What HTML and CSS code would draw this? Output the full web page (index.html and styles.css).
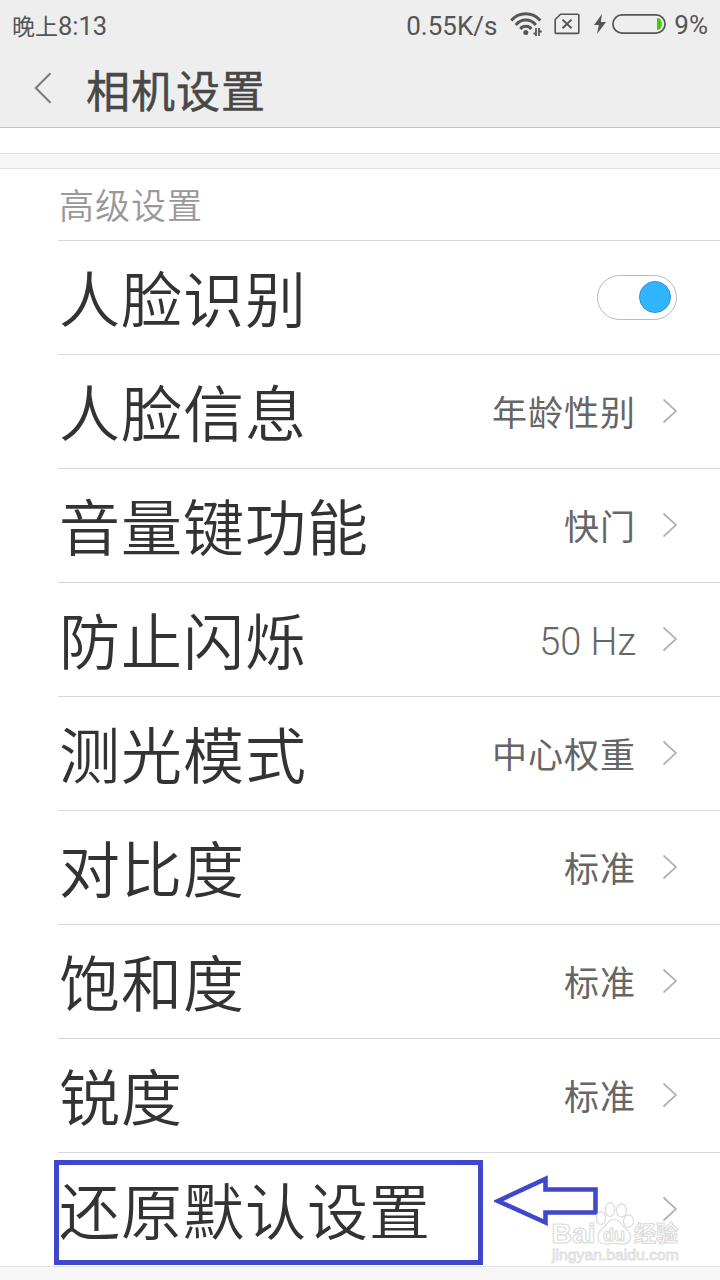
FILE: index.html
```html
<!DOCTYPE html>
<html lang="zh-CN">

<head>
    <meta charset="UTF-8">
    <meta name="viewport" content="width=device-width, initial-scale=1.0">
    <title>相机设置</title>
    <link rel="stylesheet" href="styles.css">
</head>

<body>

    <svg class="symbols" width="0" height="0">
        <symbol id="chevron" viewBox="0 0 16 26">
            <path d="M1.5 1.5 L14 13 L1.5 24.5" fill="none" stroke="#b2b2b2" stroke-width="1.7"/>
        </symbol>
    </svg>

    <header>

        <div class="status-bar">
            <span class="time">晚上<span class="clock">8:13</span></span>
            <span class="speed">0.55K/s</span>
            <svg class="wifi" width="34" height="26" viewBox="0 0 34 26">
                <g fill="none" stroke="#555" stroke-width="3">
                    <path d="M1.2 9.6 C9 0.6 22.5 0.6 30.3 9.6"/>
                    <path d="M5.8 14 C11 7.4 20.6 7.4 25.8 14"/>
                    <path d="M10.3 18 C13 14.4 18.6 14.4 21.3 18"/>
                </g>
                <circle cx="15.8" cy="21.4" r="2.5" fill="#555"/>
                <path d="M26 17 V25 M29 17 V25 M23.5 22.5 H26 M29 20.5 H31.8" stroke="#555" stroke-width="1.8"/>
            </svg>
            <svg class="sim" width="26" height="22" viewBox="0 0 26 22">
                <path d="M6.5 1.2 H24 Q24.8 1.2 24.8 2 V19.6 Q24.8 20.4 24 20.4 H2 Q1.2 20.4 1.2 19.6 V6.5 Z" fill="none" stroke="#555" stroke-width="1.6"/>
                <path d="M8.5 6.6 L17.5 15.2 M17.5 6.6 L8.5 15.2" stroke="#555" stroke-width="2"/>
            </svg>
            <svg class="bolt" width="12" height="20" viewBox="0 0 12 20">
                <path d="M8 0 L0 11 H4.8 L3 20 L12 8 H6.8 Z" fill="#555"/>
            </svg>
            <svg class="battery" width="54" height="20" viewBox="0 0 54 20">
                <rect x="0.9" y="0.9" width="52.2" height="18.2" rx="9.1" fill="none" stroke="#555" stroke-width="1.7"/>
                <path d="M45 4 C51.4 4 51.4 16 45 16 Z" fill="#46c800"/>
            </svg>
            <span class="percent">9%</span>
        </div>

        <div class="title-bar">
            <svg class="back" width="18" height="32" viewBox="0 0 18 32">
                <path d="M16 1.8 L1.8 16 L16 30.2" fill="none" stroke="#7a7a7a" stroke-width="2" stroke-linecap="round"/>
            </svg>
            <h1>相机设置</h1>
        </div>

    </header>

    <main>

        <div class="divider"></div>

        <section class="settings">
            <h2>高级设置</h2>

            <div class="row">
                <span class="label">人脸识别</span>
                <span class="switch"><span class="knob"></span></span>
            </div>
            <div class="row">
                <span class="label">人脸信息</span>
                <span class="value">年龄性别</span>
                <svg class="chevron"><use href="#chevron"/></svg>
            </div>
            <div class="row">
                <span class="label">音量键功能</span>
                <span class="value">快门</span>
                <svg class="chevron"><use href="#chevron"/></svg>
            </div>
            <div class="row">
                <span class="label">防止闪烁</span>
                <span class="value latin">50 Hz</span>
                <svg class="chevron"><use href="#chevron"/></svg>
            </div>
            <div class="row">
                <span class="label">测光模式</span>
                <span class="value">中心权重</span>
                <svg class="chevron"><use href="#chevron"/></svg>
            </div>
            <div class="row">
                <span class="label">对比度</span>
                <span class="value">标准</span>
                <svg class="chevron"><use href="#chevron"/></svg>
            </div>
            <div class="row">
                <span class="label">饱和度</span>
                <span class="value">标准</span>
                <svg class="chevron"><use href="#chevron"/></svg>
            </div>
            <div class="row">
                <span class="label">锐度</span>
                <span class="value">标准</span>
                <svg class="chevron"><use href="#chevron"/></svg>
            </div>
            <div class="row">
                <span class="label">还原默认设置</span>
                <svg class="chevron"><use href="#chevron"/></svg>

                <!-- marks drawn over the last row -->
                <div class="highlight"></div>
                <svg class="arrow" width="104" height="52" viewBox="0 0 104 52">
                    <path d="M4 26 L51.5 3.8 V14.5 H101.5 V37.5 H51.5 V47.5 Z" fill="none" stroke="#3f48cc" stroke-width="4.6"/>
                </svg>
                <svg class="watermark" width="132" height="66" viewBox="0 0 132 66">
                    <g fill="#fff" stroke="#dcdcdc" stroke-width="1.2">
                        <ellipse cx="69" cy="17" rx="4.6" ry="6.4"/>
                        <ellipse cx="78" cy="8.5" rx="4.8" ry="6.8"/>
                        <ellipse cx="89.5" cy="9.5" rx="5" ry="6.6"/>
                        <ellipse cx="96.5" cy="20" rx="5" ry="6.2"/>
                        <path d="M82 18.5 C88 18.5 89 23 93 27 C98 31 99.5 34 98.5 38 C97 43 91 43.5 88 43 C84 42 81 42 77 43 C73 43.5 67 43 66 38 C65 33 67 30 71 27 C76 23 76 18.5 82 18.5 Z"/>
                        <text class="mark-bai" x="19.5" y="41.5" textLength="44" lengthAdjust="spacingAndGlyphs">Bai</text>
                        <text class="mark-du" x="71" y="39.5" textLength="22" lengthAdjust="spacingAndGlyphs">du</text>
                        <text class="mark-cjk" x="102" y="40" textLength="44" lengthAdjust="spacingAndGlyphs">经验</text>
                        <text class="mark-url" x="20" y="59" textLength="127" lengthAdjust="spacingAndGlyphs">jingyan.baidu.com</text>
                    </g>
                </svg>
            </div>
        </section>

    </main>

</body>

</html>
```
FILE: styles.css
```css
:root {
    --bar: #eee;
    --line: #d7d7d7;
    --dark: #333;
    --grey: #666;
    --light: #999;
    --blue: #33b4ff;
    --mark: #3f48cc;
}

* {
    margin: 0;
    box-sizing: border-box;
}

body {
    width: 720px;
    height: 1280px;
    overflow: hidden;
    display: flex;
    flex-direction: column;
    background-color: #f7f7f7;
    color: var(--dark);
    font-family: "Noto Sans CJK SC", sans-serif;
}

.symbols {
    position: absolute;
}

header {
    height: 128px;
    background-color: var(--bar);
    border-bottom: 1px solid #c4c4c4;
}

.status-bar {
    display: flex;
    align-items: center;
    height: 48px;
    padding: 0 12px;
    color: #555;
    font-family: Roboto, sans-serif;
    font-size: 26px;
    line-height: 48px;
    white-space: nowrap;
}

.time {
    flex: 1;
    padding-top: 2px;
    font-family: "Noto Sans CJK SC", sans-serif;
    font-size: 23px;
}

.clock {
    font-family: Roboto, sans-serif;
    font-size: 25.5px;
}

.speed {
    margin-right: 13px;
    padding-top: 4px;
}

.wifi {
    margin-right: 10px;
}

.sim {
    margin-right: 14px;
}

.bolt {
    margin-right: 6px;
}

.battery {
    margin-right: 8px;
}

.percent {
    padding-top: 2px;
}

.title-bar {
    display: flex;
    align-items: center;
    height: 80px;
    padding: 0 0 1px 34px;
}

.title-bar h1 {
    margin-left: 34px;
    padding-top: 2px;
    font-size: 44px;
    font-weight: 400;
    letter-spacing: 1px;
    line-height: 78px;
    color: #484848;
    -webkit-text-stroke: 0.5px #484848;
}

main {
    padding-top: 25px;
    background-color: #fff;
}

.divider {
    height: 16px;
    background-color: #f7f7f7;
    border-top: 1px solid #e2e2e2;
    border-bottom: 1px solid #e2e2e2;
}

.settings {
    padding-left: 58px;
    border-bottom: 1px solid #e2e2e2;
}

.settings h2 {
    height: 71px;
    padding-left: 1px;
    font-size: 35px;
    font-weight: 350;
    letter-spacing: 1px;
    line-height: 70px;
    color: var(--light);
}

.row {
    position: relative;
    display: flex;
    align-items: center;
    height: 114px;
    padding-right: 42px;
    border-top: 1px solid var(--line);
    white-space: nowrap;
}

.label {
    flex: 1;
    height: 113px;
    padding-left: 1px;
    font-size: 61px;
    font-weight: 350;
    letter-spacing: 1px;
    line-height: 111px;
}

.value {
    height: 113px;
    margin-right: 26px;
    font-size: 35px;
    letter-spacing: 1px;
    line-height: 111px;
    color: var(--grey);
}

.latin {
    font-family: Roboto, sans-serif;
    font-size: 38px;
    font-weight: 300;
    letter-spacing: 0;
    line-height: 118px;
}

.chevron {
    width: 16px;
    height: 26px;
    margin-bottom: 1px;
}

.switch {
    display: flex;
    align-items: center;
    justify-content: flex-end;
    width: 80px;
    height: 45px;
    margin-right: 1px;
    padding: 0 5px 1px 0;
    border: 1px solid #bbb;
    border-radius: 23px;
}

.knob {
    width: 32px;
    height: 32px;
    background-color: var(--blue);
    border: 1px solid #2a94dc;
    border-radius: 50%;
}

.highlight {
    position: absolute;
    left: -4px;
    top: 7px;
    width: 429px;
    height: 105px;
    border: 5px solid var(--mark);
}

.arrow {
    position: absolute;
    left: 436px;
    top: 22px;
}

.watermark {
    position: absolute;
    left: 474px;
    top: 48px;
    overflow: visible;
}

.mark-bai {
    font-family: "Liberation Sans", sans-serif;
    font-size: 28px;
    font-weight: bold;
}

.mark-du {
    font-family: "Liberation Sans", sans-serif;
    font-size: 19px;
    font-weight: bold;
}

.mark-cjk {
    font-size: 22px;
    font-weight: bold;
}

.mark-url {
    font-family: "Liberation Sans", sans-serif;
    font-size: 14px;
    stroke-width: 0.8px;
}
```
